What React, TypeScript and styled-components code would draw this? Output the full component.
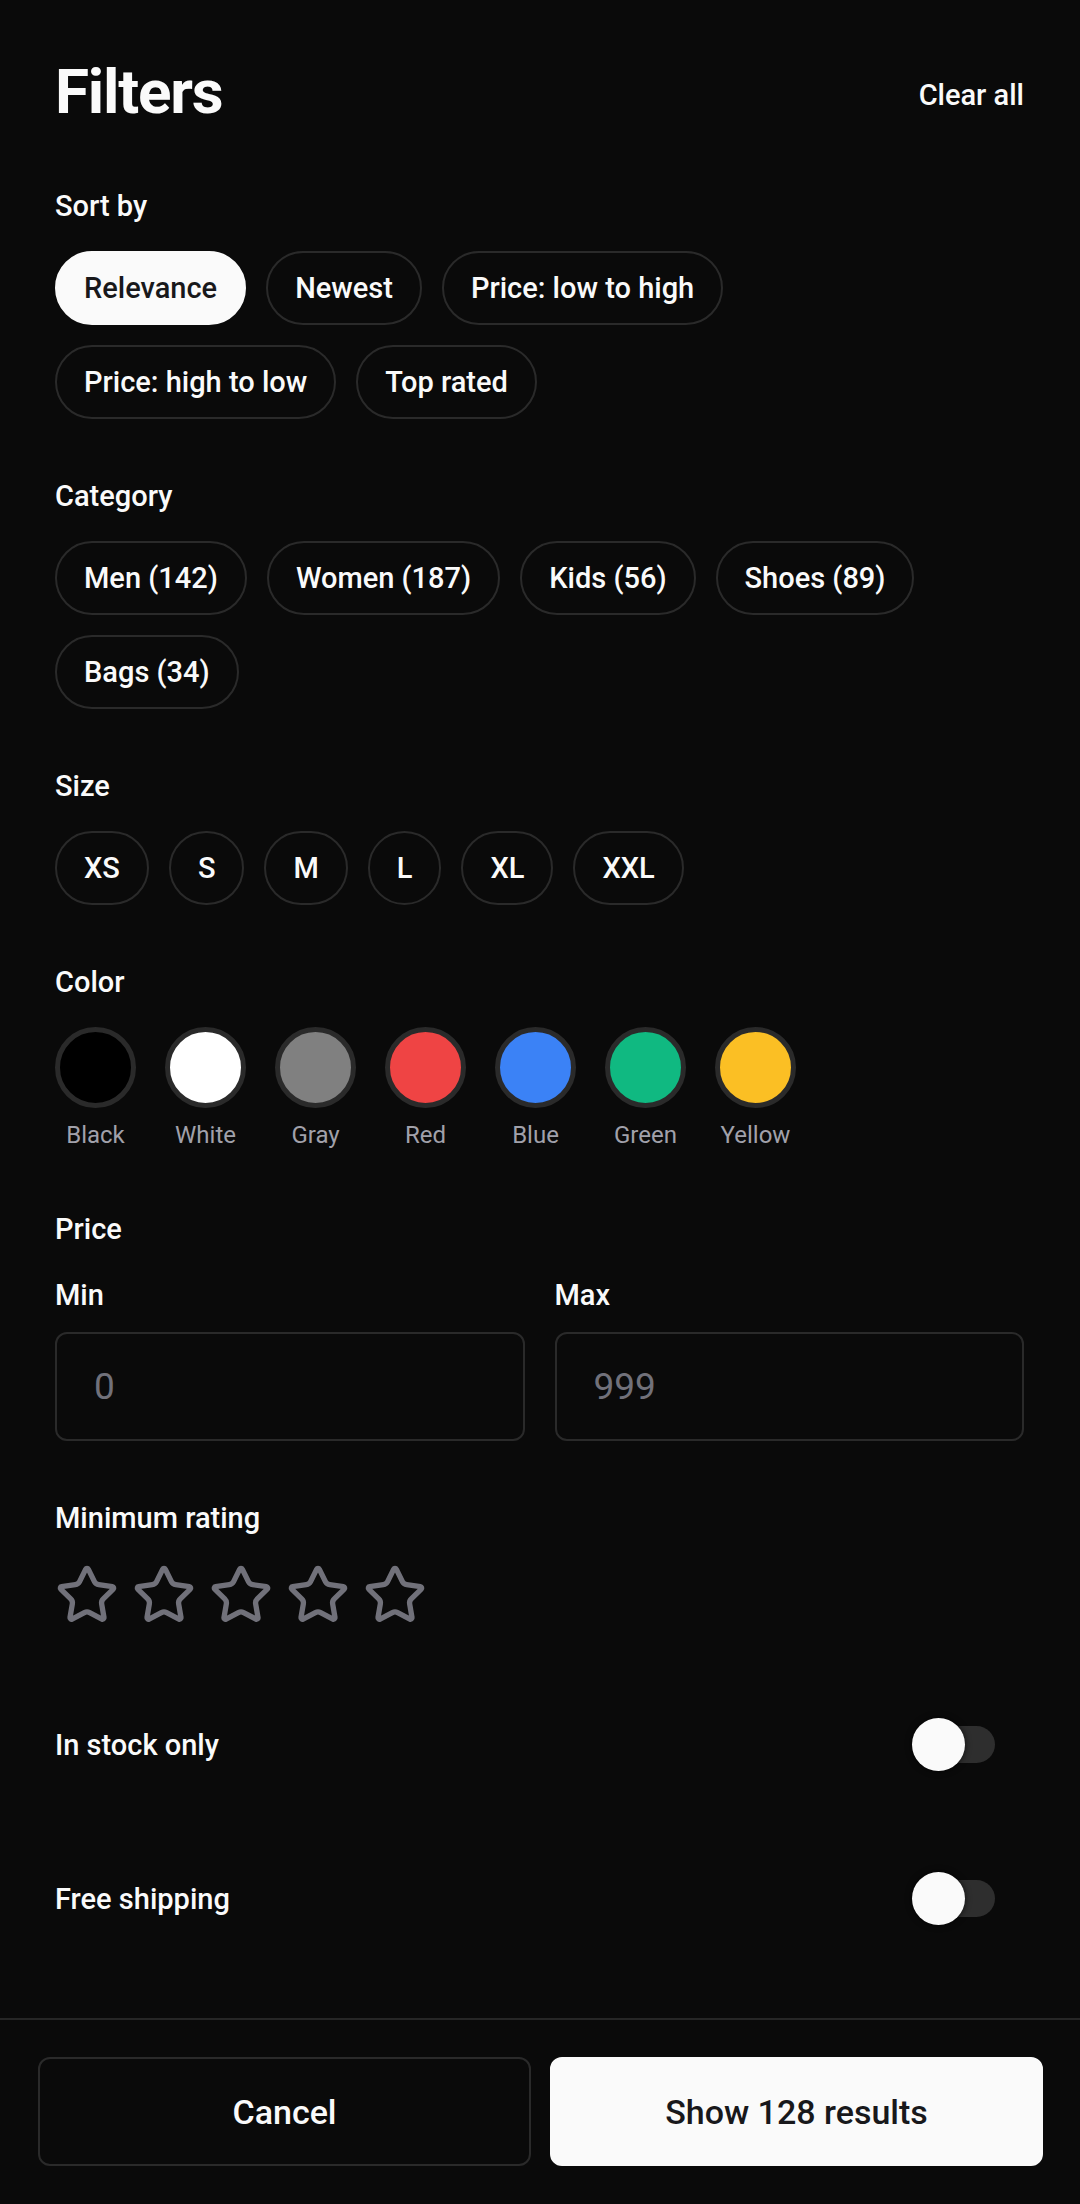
import React, { useState } from "react";
import styled, { createGlobalStyle } from "styled-components";
import { Star } from "lucide-react";

const BG = "#0a0a0a";
const BORDER = "#2a2a2a";
const TEXT = "#fafafa";
const MUTED = "#a1a1aa";
const DIM = "#71717a";

const GlobalStyle = createGlobalStyle`
  html, body {
    margin: 0;
    padding: 0;
    background: ${BG};
  }
  body {
    font-family: Roboto, "Noto Sans", "Liberation Sans", sans-serif;
    color: ${TEXT};
  }
  * {
    box-sizing: border-box;
  }
`;

const Screen = styled.div`
  display: flex;
  flex-direction: column;
  height: 100vh;
  background: ${BG};
`;

const Body = styled.div`
  flex: 1;
  overflow-y: auto;
  padding: 55px 56px 0 55px;
`;

const Header = styled.div`
  display: flex;
  align-items: center;
  justify-content: space-between;
`;

const Title = styled.h1`
  margin: 0;
  font-size: 62px;
  line-height: 74px;
  font-weight: 700;
  letter-spacing: -1.2px;
`;

const ClearButton = styled.button`
  background: none;
  border: none;
  padding: 5px 0 0;
  color: ${TEXT};
  font-family: inherit;
  font-size: 29px;
  line-height: 42px;
  font-weight: 500;
  cursor: pointer;
`;

const Section = styled.section`
  margin-top: 56px;
`;

const Label = styled.div`
  font-size: 29px;
  line-height: 42px;
  font-weight: 500;
  margin-bottom: 24px;
`;

const ChipGroup = styled.div`
  display: flex;
  flex-wrap: wrap;
  gap: 20px;
`;

const Chip = styled.button<{ $active?: boolean }>`
  padding: 14px 27px;
  border-radius: 999px;
  border: 2px solid ${(p) => (p.$active ? TEXT : BORDER)};
  background: ${(p) => (p.$active ? TEXT : "transparent")};
  color: ${(p) => (p.$active ? "#18181b" : TEXT)};
  font-family: inherit;
  font-size: 29px;
  line-height: 42px;
  font-weight: 500;
  cursor: pointer;
`;

const SwatchRow = styled.div`
  display: flex;
  gap: 29px;
`;

const SwatchItem = styled.div`
  display: flex;
  flex-direction: column;
  align-items: center;
  gap: 10px;
  width: 81px;
`;

const Swatch = styled.button<{ $color: string }>`
  width: 81px;
  height: 81px;
  padding: 0;
  border-radius: 50%;
  border: 5px solid ${BORDER};
  background: ${(p) => p.$color};
  cursor: pointer;
`;

const SwatchName = styled.span`
  font-size: 24px;
  line-height: 34px;
  color: ${MUTED};
  white-space: nowrap;
`;

const PriceGrid = styled.div`
  display: grid;
  grid-template-columns: 1fr 1fr;
  gap: 30px;
`;

const Field = styled.label`
  display: flex;
  flex-direction: column;
  gap: 16px;
`;

const FieldLabel = styled.span`
  font-size: 29px;
  line-height: 42px;
  font-weight: 500;
`;

const PriceInput = styled.input`
  height: 109px;
  width: 100%;
  padding: 0 37px;
  border: 2px solid ${BORDER};
  border-radius: 12px;
  background: transparent;
  color: ${TEXT};
  font-family: inherit;
  font-size: 37px;
  outline: none;

  &::placeholder {
    color: ${DIM};
  }
`;

const Stars = styled.div`
  display: flex;
  gap: 13px;
`;

const StarButton = styled.button`
  display: flex;
  padding: 0;
  background: none;
  border: none;
  color: ${DIM};
  cursor: pointer;
`;

const ToggleList = styled.div`
  display: flex;
  flex-direction: column;
  gap: 27px;
  margin-top: 54px;
  padding-bottom: 40px;
`;

const ToggleRow = styled.div`
  display: flex;
  align-items: center;
  justify-content: space-between;
  min-height: 127px;
`;

const ToggleLabel = styled.span`
  font-size: 29px;
  line-height: 42px;
  font-weight: 500;
`;

const Track = styled.button<{ $on: boolean }>`
  position: relative;
  width: 80px;
  height: 37px;
  margin-right: 29px;
  padding: 0;
  border: none;
  border-radius: 19px;
  background: ${(p) => (p.$on ? TEXT : "#2e2e2e")};
  cursor: pointer;
`;

const Knob = styled.span<{ $on: boolean }>`
  position: absolute;
  top: -8px;
  left: ${(p) => (p.$on ? "30px" : "-3px")};
  width: 53px;
  height: 53px;
  border-radius: 50%;
  background: ${(p) => (p.$on ? "#18181b" : TEXT)};
  box-shadow: 0 0 6px rgba(0, 0, 0, 0.7);
`;

const Footer = styled.footer`
  display: grid;
  grid-template-columns: 1fr 1fr;
  gap: 19px;
  padding: 37px 37px 38px 38px;
  border-top: 2px solid #262626;
`;

const FooterButton = styled.button<{ $primary?: boolean }>`
  height: 109px;
  border-radius: 12px;
  border: 2px solid ${(p) => (p.$primary ? TEXT : BORDER)};
  background: ${(p) => (p.$primary ? TEXT : "transparent")};
  color: ${(p) => (p.$primary ? "#18181b" : TEXT)};
  font-family: inherit;
  font-size: 34px;
  font-weight: 500;
  cursor: pointer;
`;

const sortOptions = ["Relevance", "Newest", "Price: low to high", "Price: high to low", "Top rated"];
const categories = ["Men (142)", "Women (187)", "Kids (56)", "Shoes (89)", "Bags (34)"];
const sizes = ["XS", "S", "M", "L", "XL", "XXL"];
const colors = [
  { name: "Black", value: "#000000" },
  { name: "White", value: "#ffffff" },
  { name: "Gray", value: "#808080" },
  { name: "Red", value: "#ef4444" },
  { name: "Blue", value: "#3b82f6" },
  { name: "Green", value: "#10b981" },
  { name: "Yellow", value: "#fbbf24" },
];

function Toggle({ label }: { label: string }) {
  const [on, setOn] = useState(false);
  return (
    <ToggleRow>
      <ToggleLabel>{label}</ToggleLabel>
      <Track $on={on} onClick={() => setOn(!on)} aria-label={label}>
        <Knob $on={on} />
      </Track>
    </ToggleRow>
  );
}

export default function App() {
  const [sort, setSort] = useState("Relevance");

  return (
    <Screen>
      <GlobalStyle />
      <Body>
        <Header>
          <Title>Filters</Title>
          <ClearButton>Clear all</ClearButton>
        </Header>

        <Section>
          <Label>Sort by</Label>
          <ChipGroup>
            {sortOptions.map((o) => (
              <Chip key={o} $active={o === sort} onClick={() => setSort(o)}>
                {o}
              </Chip>
            ))}
          </ChipGroup>
        </Section>

        <Section>
          <Label>Category</Label>
          <ChipGroup>
            {categories.map((c) => (
              <Chip key={c}>{c}</Chip>
            ))}
          </ChipGroup>
        </Section>

        <Section>
          <Label>Size</Label>
          <ChipGroup>
            {sizes.map((s) => (
              <Chip key={s}>{s}</Chip>
            ))}
          </ChipGroup>
        </Section>

        <Section>
          <Label>Color</Label>
          <SwatchRow>
            {colors.map((c) => (
              <SwatchItem key={c.name}>
                <Swatch $color={c.value} aria-label={c.name} />
                <SwatchName>{c.name}</SwatchName>
              </SwatchItem>
            ))}
          </SwatchRow>
        </Section>

        <Section>
          <Label>Price</Label>
          <PriceGrid>
            <Field>
              <FieldLabel>Min</FieldLabel>
              <PriceInput placeholder="0" inputMode="numeric" />
            </Field>
            <Field>
              <FieldLabel>Max</FieldLabel>
              <PriceInput placeholder="999" inputMode="numeric" />
            </Field>
          </PriceGrid>
        </Section>

        <Section>
          <Label>Minimum rating</Label>
          <Stars>
            {[1, 2, 3, 4, 5].map((n) => (
              <StarButton key={n} aria-label={`${n} stars`}>
                <Star size={64} strokeWidth={2} />
              </StarButton>
            ))}
          </Stars>
        </Section>

        <ToggleList>
          <Toggle label="In stock only" />
          <Toggle label="Free shipping" />
        </ToggleList>
      </Body>

      <Footer>
        <FooterButton>Cancel</FooterButton>
        <FooterButton $primary>Show 128 results</FooterButton>
      </Footer>
    </Screen>
  );
}
